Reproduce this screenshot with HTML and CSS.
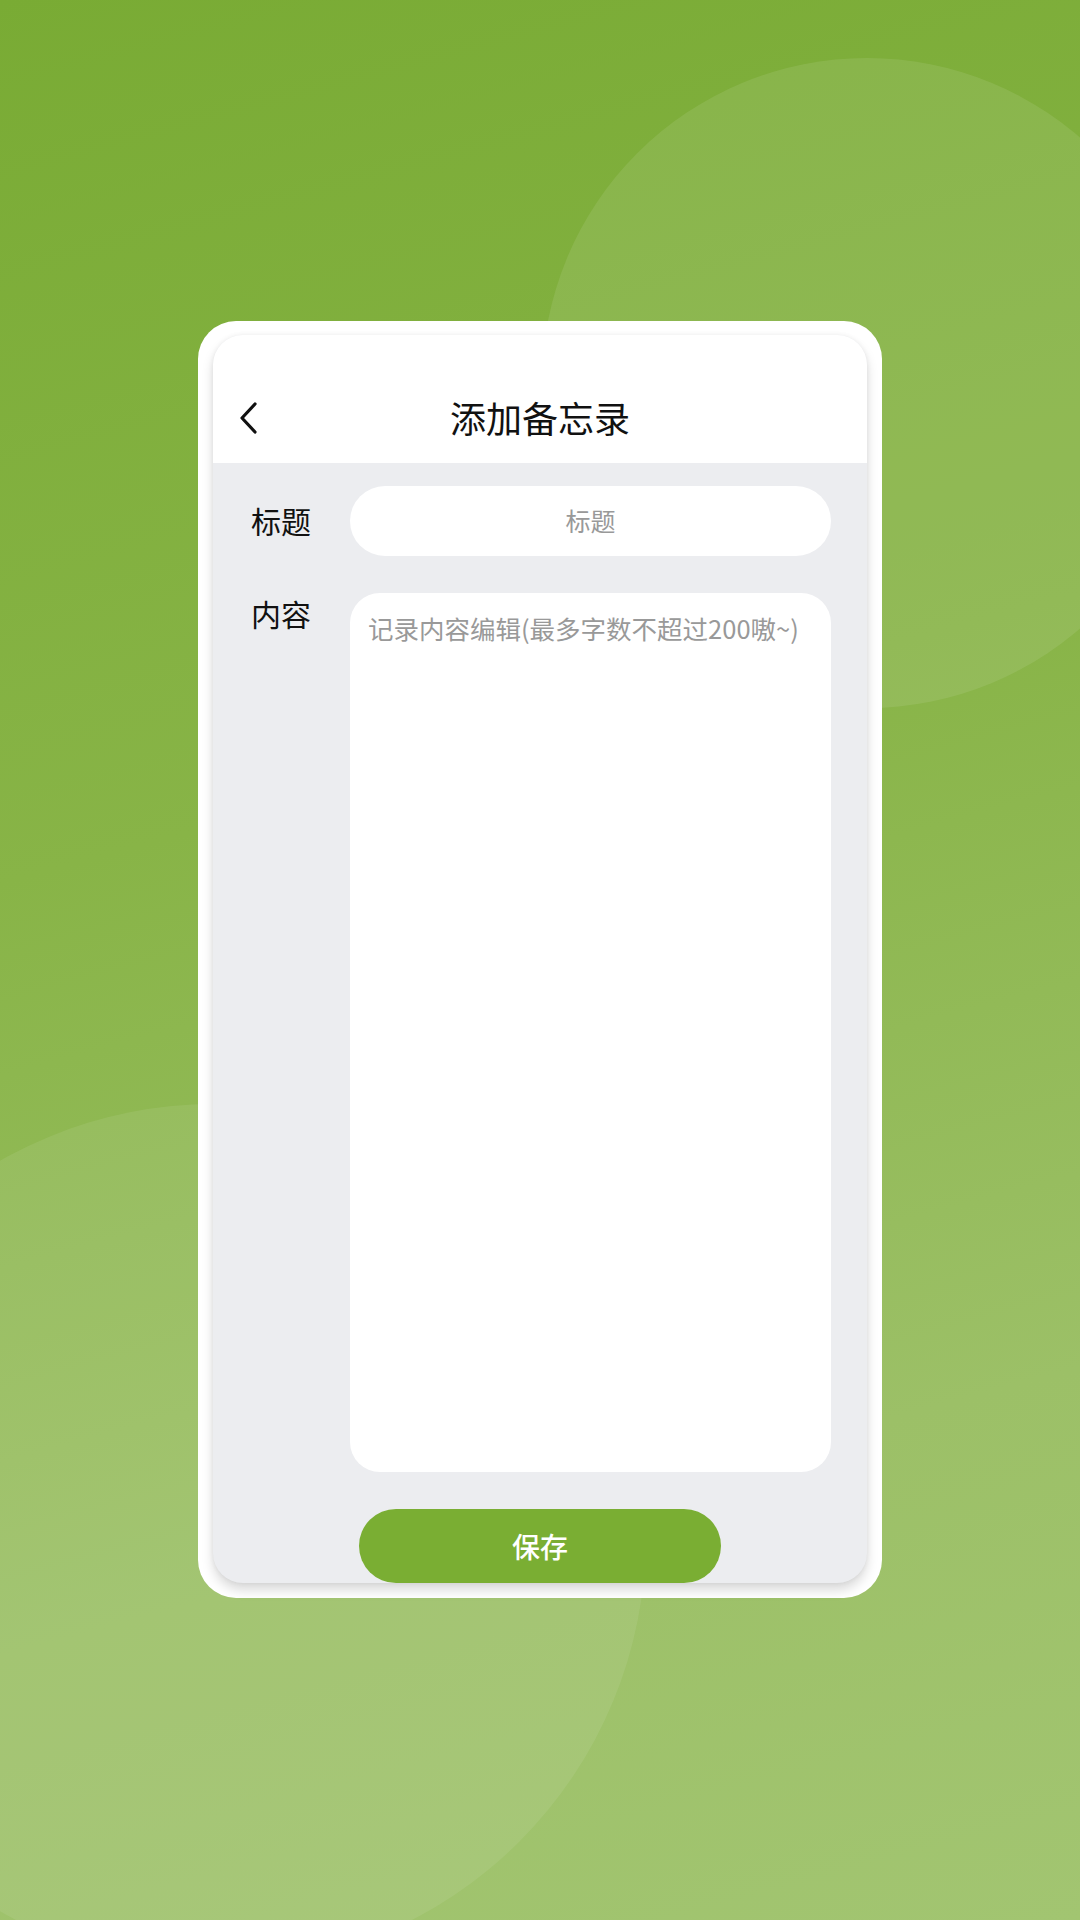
FILE: index.html
```html
<!DOCTYPE html>
<html lang="zh-CN">
<head>
<meta charset="utf-8">
<title>添加备忘录</title>
<link rel="stylesheet" href="styles.css">
</head>
<body>
<div class="bg">
  <div class="circle circle-top"></div>
  <div class="circle circle-bottom"></div>
  <div class="frame">
    <div class="card">
      <header class="header">
        <div class="nav">
          <span class="back">
            <svg width="22" height="34" viewBox="0 0 22 34"><path d="M18 3 L5 17 L18 31" fill="none" stroke="#111" stroke-width="3.2" stroke-linecap="round" stroke-linejoin="round"/></svg>
          </span>
          <h1 class="title">添加备忘录</h1>
          <span></span>
        </div>
      </header>
      <main class="body">
        <div class="row">
          <label class="label">标题</label>
          <div class="input"><span class="placeholder">标题</span></div>
        </div>
        <div class="row row-top">
          <label class="label">内容</label>
          <div class="textarea"><span class="placeholder">记录内容编辑(最多字数不超过200嗷~)</span></div>
        </div>
        <button class="save">保存</button>
      </main>
    </div>
  </div>
</div>
</body>
</html>
```

FILE: styles.css
```css
html, body {
  margin: 0;
  padding: 0;
}
body {
  width: 1080px;
  height: 1920px;
  overflow: hidden;
  font-family: "Noto Sans CJK SC", "Noto Sans", sans-serif;
}
.bg {
  position: relative;
  width: 1080px;
  height: 1920px;
  overflow: hidden;
  background: linear-gradient(165deg, #79ab34 0%, #88b447 40%, #9cc067 75%, #a2c571 100%);
  padding-top: 321px;
  box-sizing: border-box;
}
.circle {
  position: absolute;
  border-radius: 50%;
  background: rgba(255, 255, 255, 0.09);
}
.circle-top {
  left: 542px;
  top: 58px;
  width: 650px;
  height: 650px;
}
.circle-bottom {
  left: -218px;
  top: 1104px;
  width: 864px;
  height: 864px;
  background: rgba(255, 255, 255, 0.08);
}
.frame {
  position: relative;
  margin-left: 198px;
  width: 684px;
  box-sizing: border-box;
  padding: 14px 15px 15px 15px;
  background: #ffffff;
  border-radius: 38px;
}
.card {
  background: #ecedf0;
  border-radius: 30px;
  box-shadow: 0 7px 12px rgba(0, 0, 0, 0.15), 0 0 5px rgba(0, 0, 0, 0.06);
  overflow: hidden;
}
.header {
  background: #ffffff;
  height: 128px;
  box-sizing: border-box;
  padding-top: 50px;
}
.nav {
  display: grid;
  grid-template-columns: 1fr auto 1fr;
  align-items: center;
  height: 64px;
}
.back {
  justify-self: start;
  margin-left: 24px;
  display: flex;
  align-items: center;
  margin-top: 2px;
}
.title {
  margin: 0;
  font-size: 36px;
  font-weight: 400;
  color: #111111;
  line-height: 64px;
}
.body {
  display: flex;
  flex-direction: column;
  padding: 23px 36px 0 38px;
}
.row {
  display: flex;
  align-items: center;
}
.row-top {
  align-items: flex-start;
  margin-top: 37px;
}
.label {
  width: 99px;
  flex: none;
  font-size: 30px;
  line-height: 40px;
  color: #111111;
  margin-top: -2px;
}
.row-top .label {
  margin-top: 0;
}
.input {
  flex: 1;
  height: 70px;
  border-radius: 35px;
  background: #ffffff;
  display: flex;
  align-items: center;
  justify-content: center;
}
.placeholder {
  font-size: 25px;
  color: #999999;
  line-height: 34px;
  margin-top: -2px;
}
.textarea {
  flex: 1;
  height: 879px;
  box-sizing: border-box;
  border-radius: 30px;
  background: #ffffff;
  padding: 17px 18px;
}
.textarea .placeholder {
  font-size: 25.5px;
  line-height: 36px;
  margin-top: 0;
}
.save {
  align-self: center;
  margin: 37px 2px 0 0;
  width: 362px;
  height: 74px;
  border: none;
  border-radius: 37px;
  background: #7aae33;
  color: #ffffff;
  font-family: "Noto Sans CJK SC", "Noto Sans", sans-serif;
  font-size: 28px;
  font-weight: 500;
  padding: 0;
}
```
